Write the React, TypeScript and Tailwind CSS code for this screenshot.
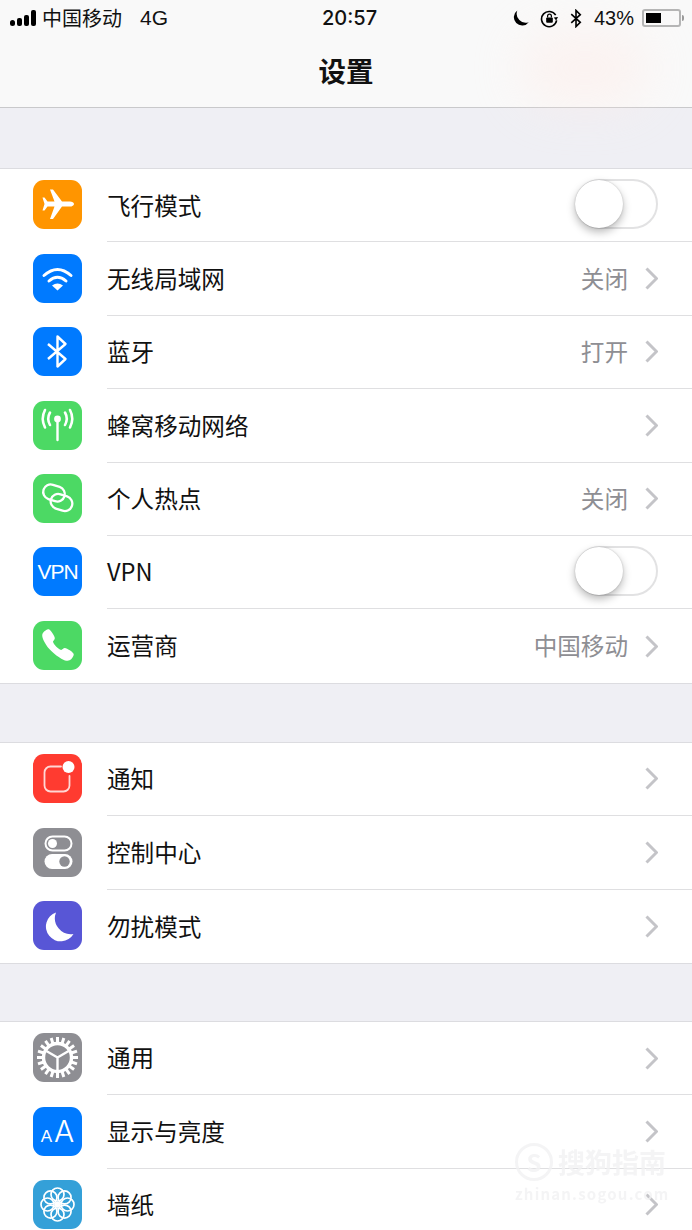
import React from "react";
import { IoCall } from "react-icons/io5";

const cjk = "font-['Noto_Sans_CJK_SC','Liberation_Sans',sans-serif]";

const Glyph: React.FC<{ children: React.ReactNode }> = ({ children }) => (
  <svg viewBox="0 0 49 49" className="w-full h-full" fill="none" stroke="white" strokeLinecap="round" strokeLinejoin="round">
    {children}
  </svg>
);

const PlaneIcon = () => (
  <Glyph>
    <path
      stroke="none"
      fill="white"
      d="M41 24c0-1.500-2-2.600-4-2.600H29L20 9.500H17L21.500 21.400H14.500L11.500 17.500H9.500L11.500 24L9.500 30.500H11.500L14.500 26.600H21.500L17 39H20L29 26.600H37c2 0 4-1.100 4-2.600z"
    />
  </Glyph>
);

const WifiIcon = () => (
  <Glyph>
    <path strokeWidth="3" d="M11 21.500Q24.500 9.500 38 21.500" />
    <path strokeWidth="3" d="M16 27Q24.500 19.500 33 27" />
    <path stroke="none" fill="white" d="M19 31.500Q24.500 27.500 30 31.500L24.500 36.500z" />
  </Glyph>
);

const BluetoothIcon = () => (
  <Glyph>
    <path strokeWidth="2.400" strokeLinecap="butt" d="M15 17L32.500 32L24.500 39.500V9.500L32.500 17L15 32" />
  </Glyph>
);

const CellularIcon = () => (
  <Glyph>
    <circle cx="24.500" cy="18" r="3.400" fill="white" stroke="none" />
    <path strokeWidth="2.400" d="M24.500 20V39" />
    <path strokeWidth="2.600" d="M17 11.500Q13.500 17.500 17 24" />
    <path strokeWidth="2.600" d="M12 9Q7.500 17.500 12 26.500" />
    <path strokeWidth="2.600" d="M32 11.500Q35.500 17.500 32 24" />
    <path strokeWidth="2.600" d="M37 9Q41.500 17.500 37 26.500" />
  </Glyph>
);

// two linked rounded loops, each tilted the same way
const HotspotIcon = () => (
  <Glyph>
    <g strokeWidth="2.300">
      <rect x="10" y="11.500" width="22" height="15" rx="7.500" transform="rotate(18 21 19)" />
      <rect x="17.500" y="21" width="22" height="15" rx="7.500" transform="rotate(18 28.500 28.500)" />
    </g>
  </Glyph>
);

const BellDotIcon = () => (
  <Glyph>
    <path strokeWidth="1.800" opacity="0.8" d="M28 12.500H17.500a6 6 0 0 0-6 6V31.500a6 6 0 0 0 6 6H30.500a6 6 0 0 0 6-6V22" />
    <circle cx="35.500" cy="13" r="6" fill="white" stroke="none" />
  </Glyph>
);

const SwitchesIcon = () => (
  <Glyph>
    <rect x="12.500" y="8.500" width="26" height="14" rx="7" strokeWidth="2" />
    <circle cx="19.500" cy="15.500" r="4.500" fill="white" stroke="none" />
    <rect x="11.500" y="26" width="28" height="15" rx="7.500" fill="white" stroke="none" />
    <circle cx="31.500" cy="33.500" r="5.200" fill="#8e8e93" stroke="none" />
  </Glyph>
);

const MoonIcon = () => (
  <Glyph>
    <path stroke="none" fill="white" d="M23 11.500A14.800 14.800 0 1 0 40.500 33A16 16 0 0 1 23 11.500z" />
  </Glyph>
);

// teeth around a heavy ring, with three spokes meeting in the middle
const GearIcon = () => (
  <Glyph>
    {Array.from({ length: 20 }).map((_, i) => (
      <path key={i} strokeWidth="3" strokeLinecap="butt" d="M24.500 4V10" transform={`rotate(${i * 18} 24.500 24.500)`} />
    ))}
    <circle cx="24.500" cy="24.500" r="14" strokeWidth="3.400" />
    <path strokeWidth="2.400" d="M24.500 24.500V38M24.500 24.500L12.500 17.500M24.500 24.500L36.500 17.500" />
  </Glyph>
);

const FlowerIcon = () => (
  <Glyph>
    {Array.from({ length: 8 }).map((_, i) => (
      <circle key={i} cx="24.500" cy="14.500" r="6.500" strokeWidth="1.700" transform={`rotate(${i * 45} 24.500 24.500)`} />
    ))}
    <circle cx="24.500" cy="24.500" r="3" fill="white" stroke="none" />
  </Glyph>
);

const Toggle = () => (
  <div className="relative w-[83px] h-[50px] mb-[2px] rounded-full border-2 border-[#e2e2e3] bg-white">
    <div className="absolute left-[-2px] top-[-1px] w-[48px] h-[48px] rounded-full bg-white shadow-[0_4px_8px_rgba(0,0,0,0.28),0_0_2px_rgba(0,0,0,0.2)]" />
  </div>
);

const Chevron = () => (
  <svg viewBox="0 0 14 23" className="w-[14px] h-[23px]" fill="none" stroke="#c4c4c8" strokeWidth="3">
    <path d="M2.500 1.500L12.500 11.500L2.500 21.500" />
  </svg>
);

interface RowProps {
  label: string;
  bg: string;
  icon: React.ReactNode;
  value?: string;
  toggle?: boolean;
  last?: boolean;
}

const Row: React.FC<RowProps> = ({ label, bg, icon, value, toggle, last }) => (
  <div className="flex items-center h-[73.4px] pl-[33px] bg-white">
    <div className={`w-[49px] h-[49px] mb-[1.5px] rounded-[11px] flex items-center justify-center shrink-0 overflow-hidden ${bg}`}>
      {icon}
    </div>
    <div className={`flex flex-1 items-center h-full ml-[25px] pr-[34px] ${last ? "" : "border-b border-[#dfdfe1]"}`}>
      <span className="text-[23.6px] text-[#111]">{label}</span>
      <div className="ml-auto flex items-center">
        {value && <span className="text-[23.6px] text-[#8e8e93] mr-[16px]">{value}</span>}
        {toggle ? <Toggle /> : <Chevron />}
      </div>
    </div>
  </div>
);

const Group: React.FC<{ className: string; children: React.ReactNode }> = ({ className, children }) => (
  <div className={`border-t border-b border-[#dcdce0] ${className}`}>{children}</div>
);

const StatusBar = () => (
  <div className="relative flex items-center h-[36px] pl-[10px] pr-[8px] text-[20px] text-[#111]">
    <div className="flex items-end gap-[2px] h-[16px] mr-[6px]">
      <div className="w-[5px] h-[6px] rounded-full bg-black" />
      <div className="w-[5px] h-[8px] rounded-[2px] bg-black" />
      <div className="w-[5px] h-[11px] rounded-[2px] bg-black" />
      <div className="w-[5px] h-[16px] rounded-[2px] bg-black" />
    </div>
    <span>中国移动</span>
    <span className="ml-[18px] text-[21px] font-['Liberation_Sans',sans-serif]">4G</span>
    <div className="absolute left-[322px] top-[4px] font-['Inter',sans-serif] font-medium leading-[28px]">20:57</div>
    <div className="ml-auto flex items-center">
      <svg viewBox="0 0 16 16" className="w-[17px] h-[17px] mr-[11px]" fill="black">
        <path d="M5 .5A7.800 7.800 0 1 0 15.800 11.500A8.500 8.500 0 0 1 5 .5z" />
      </svg>
      <svg viewBox="0 0 20 20" className="w-[19px] h-[19px] mr-[11px]" fill="none" stroke="black" strokeWidth="1.700">
        <path d="M16.500 6.500A8 8 0 1 0 17.500 12" />
        <path d="M19 8.500L17 12L14.500 9" fill="black" stroke="none" />
        <rect x="6.500" y="9" width="7" height="5.500" rx="1" fill="black" stroke="none" />
        <path strokeWidth="1.300" d="M8 9V7.500a2 2 0 0 1 4 0V9" />
      </svg>
      <svg viewBox="0 0 12 20" className="w-[12px] h-[19px] mr-[12px]" fill="none" stroke="black" strokeWidth="1.700">
        <path d="M1 5.500L10.500 14L6 18.500V1.500L10.500 6L1 14.500" />
      </svg>
      <span className="font-['Liberation_Sans',sans-serif] w-[41px] mr-[7px]">43%</span>
      <div className="w-[39px] h-[18px] rounded-[3px] border-2 border-[#b5b5b5] p-[2px]">
        <div className="h-full w-[47%] bg-black" />
      </div>
      <div className="w-[2px] h-[6px] ml-[1px] rounded-r-sm bg-[#9a9a9a]" />
    </div>
  </div>
);

const App: React.FC = () => {
  return (
    <div className={`relative w-[692px] h-[1230px] overflow-hidden bg-[#efeff4] ${cjk}`}>
      <header className="relative h-[108px] bg-[#f9f9f9] border-b border-[#c9c9cb]">
        <div className="absolute left-[520px] top-[30px] w-[130px] h-[76px] rounded-full bg-[#ffe9e4] opacity-40 blur-xl" />
        <div className="relative">
          <StatusBar />
          <h1 className="text-center text-[27.500px] font-bold leading-[36px] mt-[16px] text-[#111]">设置</h1>
        </div>
      </header>

      <Group className="mt-[60px]">
        <Row label="飞行模式" bg="bg-[#ff9500]" icon={<PlaneIcon />} toggle />
        <Row label="无线局域网" bg="bg-[#007aff]" icon={<WifiIcon />} value="关闭" />
        <Row label="蓝牙" bg="bg-[#007aff]" icon={<BluetoothIcon />} value="打开" />
        <Row label="蜂窝移动网络" bg="bg-[#4cd964]" icon={<CellularIcon />} />
        <Row label="个人热点" bg="bg-[#4cd964]" icon={<HotspotIcon />} value="关闭" />
        <Row
          label="VPN"
          bg="bg-[#007aff]"
          icon={<span className="font-['Liberation_Sans',sans-serif] text-[21px] tracking-[-1px] text-white">VPN</span>}
          toggle
        />
        <Row label="运营商" bg="bg-[#4cd964]" icon={<IoCall className="text-white w-[36px] h-[36px]" />} value="中国移动" last />
      </Group>

      <Group className="mt-[58px]">
        <Row label="通知" bg="bg-[#ff3b30]" icon={<BellDotIcon />} />
        <Row label="控制中心" bg="bg-[#8e8e93]" icon={<SwitchesIcon />} />
        <Row label="勿扰模式" bg="bg-[#5856d6]" icon={<MoonIcon />} last />
      </Group>

      <Group className="mt-[57px]">
        <Row label="通用" bg="bg-[#8e8e93]" icon={<GearIcon />} />
        <Row
          label="显示与亮度"
          bg="bg-[#007aff]"
          icon={
            <span className="flex items-baseline gap-[2px] text-white">
              <span className="font-['Liberation_Sans',sans-serif] text-[17px]">A</span>
              <span className="font-['Inter',sans-serif] font-light text-[30px]">A</span>
            </span>
          }
        />
        <Row label="墙纸" bg="bg-[#34a0d8]" icon={<FlowerIcon />} />
      </Group>

      {/* site stamp in the lower right corner */}
      <div className="absolute left-[515px] top-[1143px] w-[154px] text-[#f1f1f3]/80 blur-[0.5px]">
        <div className="flex items-center">
          <div className="w-[38px] h-[38px] rounded-full border-[3px] border-current flex items-center justify-center text-[24px] font-bold leading-none">
            S
          </div>
          <span className="ml-[5px] text-[27px] leading-[38px] font-bold whitespace-nowrap">搜狗指南</span>
        </div>
        <div className="mt-[5px] text-[15px] leading-[16px] font-bold whitespace-nowrap tracking-[1.2px]">zhinan.sogou.com</div>
      </div>
    </div>
  );
};

export default App;
